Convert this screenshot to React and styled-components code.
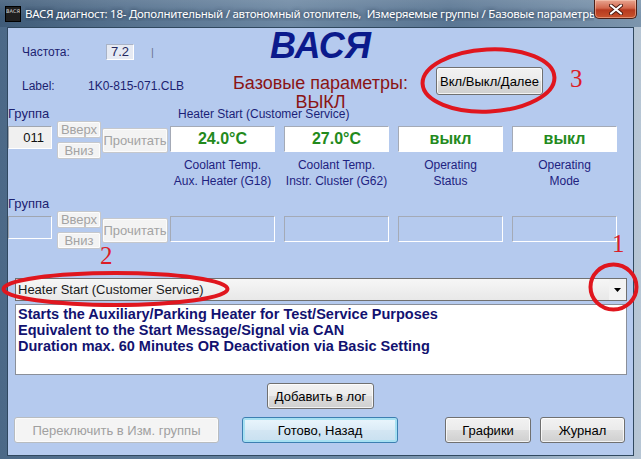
import React from "react";
import styled, { createGlobalStyle, css } from "styled-components";

const GlobalStyle = createGlobalStyle`
  html, body {
    margin: 0;
    padding: 0;
    background: #ffffff;
  }
  body {
    font-family: "Liberation Sans", Arial, sans-serif;
  }
`;

const groups = [
  {
    number: "011",
    title: "Heater Start (Customer Service)",
    cells: [
      { value: "24.0°C", caption: ["Coolant Temp.", "Aux. Heater (G18)"] },
      { value: "27.0°C", caption: ["Coolant Temp.", "Instr. Cluster (G62)"] },
      { value: "выкл", caption: ["Operating", "Status"] },
      { value: "выкл", caption: ["Operating", "Mode"] }
    ]
  },
  { number: "", title: "", empty: true, cells: [{}, {}, {}, {}] }
];

const description = [
  "Starts the Auxiliary/Parking Heater for Test/Service Purposes",
  "Equivalent to the Start Message/Signal via CAN",
  "Duration max. 60 Minutes OR Deactivation via Basic Setting"
];

const GroupBlock = ({ group }) => (
  <Group>
    <GroupHead>
      <GroupLabel>Группа</GroupLabel>
      <GroupTitle>{group.title}</GroupTitle>
    </GroupHead>
    <GroupBody>
      <NumberBox $empty={group.empty}>{group.number}</NumberBox>
      <UpDown>
        <SmallButton disabled>Вверх</SmallButton>
        <SmallButton disabled>Вниз</SmallButton>
      </UpDown>
      <ReadButton disabled>Прочитать</ReadButton>
      <Cells>
        {group.cells.map((cell, i) => (
          <Cell key={i}>
            <ValueBox $empty={group.empty}>{cell.value}</ValueBox>
            {cell.caption && (
              <Caption>
                {cell.caption[0]}
                <br />
                {cell.caption[1]}
              </Caption>
            )}
          </Cell>
        ))}
      </Cells>
    </GroupBody>
  </Group>
);

export default function App() {
  return (
    <>
      <GlobalStyle />
      <Window>
        <TitleBar>
          <AppIcon>ВАСЯ</AppIcon>
          <TitleText>
            ВАСЯ диагност: 18- Дополнительный / автономный отопитель,&nbsp;
            Измеряемые группы / Базовые параметры
          </TitleText>
          <CloseButton>
            <svg width="14" height="11" viewBox="0 0 14 11">
              <path
                d="M2 1.5 L12 9.5 M12 1.5 L2 9.5"
                stroke="#4a1a10"
                strokeWidth="4"
                strokeLinecap="round"
              />
              <path
                d="M2 1.5 L12 9.5 M12 1.5 L2 9.5"
                stroke="#ffffff"
                strokeWidth="2.2"
                strokeLinecap="round"
              />
            </svg>
          </CloseButton>
        </TitleBar>

        <Client>
          <Header>
            <InfoBlock>
              <InfoRow>
                <InfoLabel $w={84}>Частота:</InfoLabel>
                <FreqBox>7.2</FreqBox>
                <Tick>|</Tick>
              </InfoRow>
              <InfoRow>
                <InfoLabel $w={66}>Label:</InfoLabel>
                <span>1K0-815-071.CLB</span>
              </InfoRow>
            </InfoBlock>
            <CenterBlock>
              <Brand>ВАСЯ</Brand>
              <ModeText>
                Базовые параметры:
                <br />
                ВЫКЛ
              </ModeText>
            </CenterBlock>
            <ActionBlock>
              <WinButton $w={107} $h={28}>
                Вкл/Выкл/Далее
              </WinButton>
            </ActionBlock>
          </Header>

          {groups.map((g, i) => (
            <GroupBlock key={i} group={g} />
          ))}

          <Select>
            <SelectText>Heater Start (Customer Service)</SelectText>
            <SelectArrow>
              <svg width="7" height="4" viewBox="0 0 7 4">
                <path d="M0 0 H7 L3.5 4 Z" fill="#000" />
              </svg>
            </SelectArrow>
          </Select>

          <Description>
            {description.map((line) => (
              <div key={line}>{line}</div>
            ))}
          </Description>

          <LogRow>
            <WinButton $w={107}>Добавить в лог</WinButton>
          </LogRow>

          <Footer>
            <WinButton $w={205} disabled>
              Переключить в Изм. группы
            </WinButton>
            <WinButton $w={156} $focus style={{ marginLeft: 23 }}>
              Готово, Назад
            </WinButton>
            <WinButton $w={86} style={{ marginLeft: 47 }}>
              Графики
            </WinButton>
            <WinButton $w={85} style={{ marginLeft: 9 }}>
              Журнал
            </WinButton>
          </Footer>
        </Client>

        <Marks viewBox="0 0 641 459" width="641" height="459">
          <ellipse
            cx="488.5"
            cy="80.5"
            rx="66"
            ry="31"
            transform="rotate(-3 488.5 80.5)"
          />
          <ellipse cx="115.5" cy="289" rx="112" ry="16" />
          <ellipse cx="613.5" cy="287" rx="23" ry="22.5" />
        </Marks>
        <Digit $x={570} $y={66}>3</Digit>
        <Digit $x={100} $y={243}>2</Digit>
        <Digit $x={612} $y={231}>1</Digit>
      </Window>
    </>
  );
}

const Window = styled.div`
  position: relative;
  width: 641px;
  height: 459px;
  display: flex;
  flex-direction: column;
  overflow: hidden;
  background: linear-gradient(
    to right,
    #4c6987 0%,
    #5f7c99 30%,
    #6d8aa6 55%,
    #8ea6bd 80%,
    #b7c6d5 100%
  );
`;

const TitleBar = styled.div`
  height: 27px;
  display: flex;
  align-items: center;
  padding: 0 4px 0 5px;
  background: linear-gradient(
      to bottom,
      rgba(255, 255, 255, 0.12),
      rgba(255, 255, 255, 0) 60%
    ),
    linear-gradient(
      to right,
      #3f5b78 0%,
      #56728f 20%,
      #6c87a2 45%,
      #5a7693 70%,
      #7c95ad 100%
    );
`;

const AppIcon = styled.div`
  width: 16px;
  height: 16px;
  flex-shrink: 0;
  background: #1f1f1f;
  border: 1px solid #000;
  box-sizing: border-box;
  color: #dcdcdc;
  font: 5px "DejaVu Sans", sans-serif;
  line-height: 9px;
  text-align: center;
  overflow: hidden;
`;

const TitleText = styled.div`
  flex: 1;
  margin-left: 4px;
  white-space: nowrap;
  overflow: hidden;
  color: #ffffff;
  font: 11.5px "Noto Sans", "Open Sans", sans-serif;
  letter-spacing: -0.25px;
  text-shadow: 0 0 4px rgba(10, 20, 40, 0.8);
`;

const CloseButton = styled.div`
  align-self: flex-start;
  width: 43px;
  height: 19px;
  display: flex;
  align-items: center;
  justify-content: center;
  border: 1px solid #4a2018;
  border-top: none;
  border-radius: 0 0 5px 5px;
  box-sizing: border-box;
  background: linear-gradient(
    to bottom,
    #e8a590 0%,
    #d2674c 45%,
    #b63a1f 55%,
    #c9532d 100%
  );
  box-shadow: inset 0 0 0 1px rgba(255, 220, 200, 0.45);
`;

const Client = styled.div`
  flex: 1;
  margin: 0 7px 3px 7px;
  border: 1px solid #30485f;
  background: #b5caee;
  display: flex;
  flex-direction: column;
  font-size: 12px;
  color: #1b1f78;
`;

const Header = styled.div`
  height: 79px;
  display: grid;
  grid-template-columns: 222px 181px 1fr;
`;

const InfoBlock = styled.div`
  display: flex;
  flex-direction: column;
  gap: 18px;
  padding: 16px 0 0 14px;
  color: #1c2270;
`;

const InfoRow = styled.div`
  display: flex;
  align-items: center;
  height: 16px;
  line-height: 14px;
`;

const InfoLabel = styled.span`
  width: ${(p) => p.$w}px;
  flex-shrink: 0;
`;

const FreqBox = styled.span`
  width: 28px;
  height: 16px;
  box-sizing: border-box;
  border: 1px solid #ffffff;
  border-top-color: #a9b3c6;
  border-left-color: #a9b3c6;
  background: #e6eaf3;
  text-align: center;
  font-size: 13px;
  line-height: 14px;
  color: #24285e;
`;

const Tick = styled.span`
  margin-left: 17px;
  color: #6b7390;
  font-size: 11px;
`;

const CenterBlock = styled.div`
  text-align: center;
  white-space: nowrap;
`;

const Brand = styled.div`
  font-size: 36px;
  line-height: 36px;
  font-weight: bold;
  font-style: italic;
  color: #0b1a8c;
`;

const ModeText = styled.div`
  margin-top: 10px;
  font-size: 18px;
  line-height: 19px;
  color: #8a1414;
`;

const ActionBlock = styled.div`
  padding: 39px 0 0 25px;
`;

const WinButton = styled.button`
  width: ${(p) => p.$w}px;
  height: ${(p) => p.$h || 26}px;
  padding: 0;
  box-sizing: border-box;
  font: 13px "Liberation Sans", Arial, sans-serif;
  color: #000000;
  border: 1px solid #707070;
  border-radius: 3px;
  background: linear-gradient(
    to bottom,
    #f2f2f2 0%,
    #ebebeb 48%,
    #dddddd 52%,
    #cfcfcf 100%
  );
  box-shadow: inset 0 0 0 1px rgba(255, 255, 255, 0.75);

  ${(p) =>
    p.$focus &&
    css`
      border-color: #3c7fb1;
      box-shadow: inset 0 0 0 2px #a6e0f2;
      background: linear-gradient(
        to bottom,
        #eaf6fd 0%,
        #dcecf7 48%,
        #d3e6f3 52%,
        #c8e0f0 100%
      );
    `}

  &:disabled {
    color: #a0a0a0;
    border-color: #b8bcc0;
    background: #f4f4f4;
    box-shadow: inset 0 0 0 1px #fbfbfb;
  }
`;

const Group = styled.div`
  & + & {
    margin-top: 8px;
  }
`;

const GroupHead = styled.div`
  display: flex;
  height: 14px;
  line-height: 14px;
  color: #1b1f78;
`;

const GroupLabel = styled.span`
  width: 170px;
  font-size: 13px;
  color: #1c2270;
`;

const GroupTitle = styled.span`
  white-space: nowrap;
`;

const GroupBody = styled.div`
  display: flex;
  align-items: flex-start;
`;

const NumberBox = styled.div`
  width: 44px;
  height: 23px;
  margin-top: 5px;
  box-sizing: border-box;
  border: 1px solid #ffffff;
  border-top-color: #a0a6b0;
  border-left-color: #a0a6b0;
  background: ${(p) => (p.$empty ? "transparent" : "#f0f0f0")};
  text-align: right;
  padding-right: 7px;
  font-size: 13px;
  line-height: 21px;
  color: #101010;
`;

const UpDown = styled.div`
  display: flex;
  flex-direction: column;
  gap: 4px;
  margin-left: 5px;
`;

const SmallButton = styled.button`
  width: 44px;
  height: 17px;
  padding: 0;
  box-sizing: border-box;
  font: 13px "Liberation Sans", Arial, sans-serif;
  line-height: 14px;
  color: #a3a3a3;
  background: #f3f3f3;
  border: 1px solid #c6c8cc;
  border-radius: 2px;
  box-shadow: inset 0 0 0 1px #fcfcfc;
`;

const ReadButton = styled(SmallButton)`
  width: 66px;
  height: 25px;
  margin-top: 7px;
  margin-left: 1px;
`;

const Cells = styled.div`
  display: grid;
  grid-template-columns: repeat(4, 105px);
  column-gap: 9px;
  margin-left: 2px;
  margin-top: 5px;
`;

const Cell = styled.div`
  display: flex;
  flex-direction: column;
`;

const ValueBox = styled.div`
  height: 26px;
  box-sizing: border-box;
  border: 1px solid #ffffff;
  border-top-color: #a4aab6;
  border-left-color: #a4aab6;
  background: ${(p) => (p.$empty ? "transparent" : "#ffffff")};
  text-align: center;
  font-size: 16px;
  font-weight: bold;
  line-height: 24px;
  color: #238a1c;
`;

const Caption = styled.div`
  margin-top: 5px;
  text-align: center;
  line-height: 16px;
  color: #1e2280;
  white-space: nowrap;
`;

const Select = styled.div`
  height: 23px;
  margin: 29px 6px 0 7px;
  box-sizing: border-box;
  display: flex;
  align-items: center;
  border: 1px solid #707070;
  background: linear-gradient(to bottom, #f6f6f6, #e8e8e8);
`;

const SelectText = styled.span`
  flex: 1;
  padding-left: 2px;
  font-size: 13px;
  color: #1a1a1a;
`;

const SelectArrow = styled.span`
  width: 17px;
  display: flex;
  justify-content: center;
  align-items: center;
  height: 100%;
  background: #f3f3f3;
`;

const Description = styled.div`
  height: 71px;
  margin: 3px 6px 0 7px;
  box-sizing: border-box;
  padding: 1px 2px;
  border: 1px solid #8a8f99;
  background: #ffffff;
  font-size: 14.5px;
  font-weight: bold;
  line-height: 16px;
  color: #121270;
  white-space: nowrap;
`;

const LogRow = styled.div`
  display: flex;
  justify-content: center;
  margin-top: 8px;
`;

const Footer = styled.div`
  display: flex;
  margin-top: 8px;
  padding-left: 6px;
`;

const Marks = styled.svg`
  position: absolute;
  left: 0;
  top: 0;
  pointer-events: none;

  ellipse {
    fill: none;
    stroke: #e0161e;
    stroke-width: 4;
  }
`;

const Digit = styled.span`
  position: absolute;
  left: ${(p) => p.$x}px;
  top: ${(p) => p.$y}px;
  font: 25px "Liberation Serif", "Times New Roman", serif;
  line-height: 25px;
  color: #dc1c26;
  pointer-events: none;
`;
